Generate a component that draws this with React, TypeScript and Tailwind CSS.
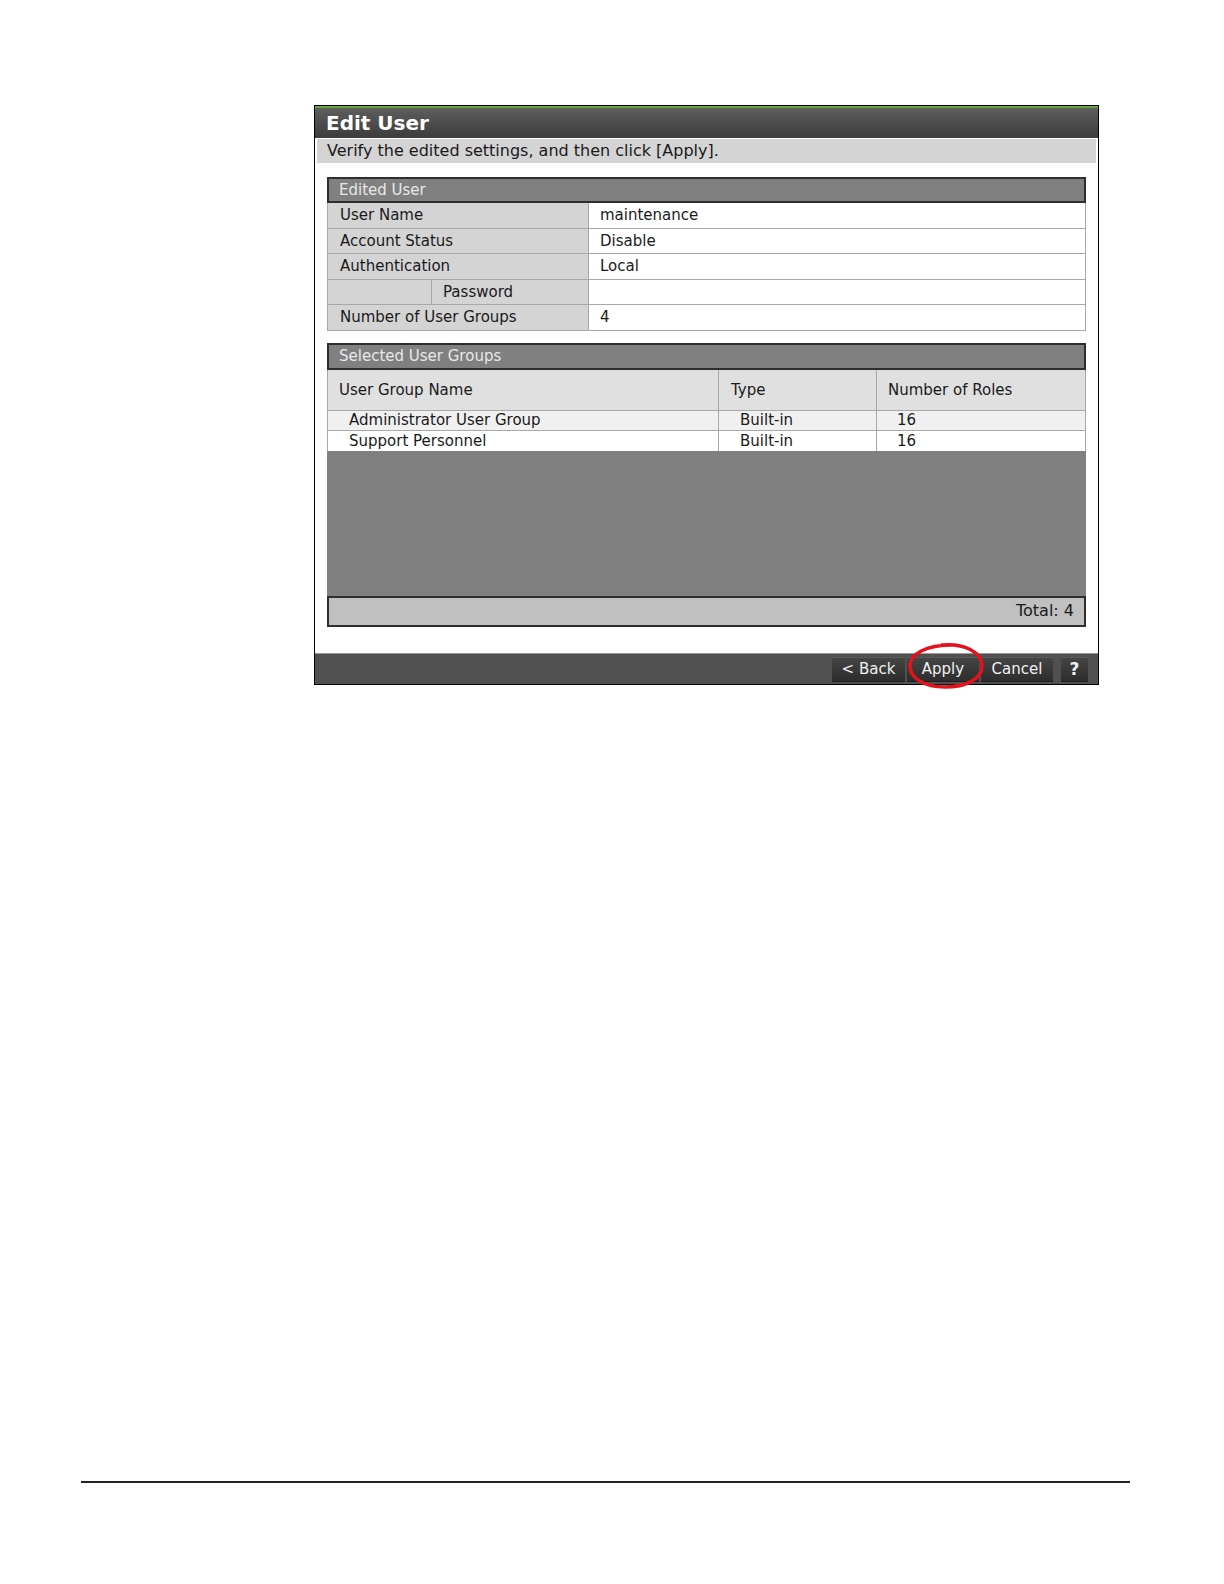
import React from "react";

const font = { fontFamily: '"DejaVu Sans", Verdana, sans-serif' };

function Row({ label, value, sub }: { label: string; value: string; sub?: boolean }) {
  return (
    <div className="flex h-[25.6px] border-b border-[#a8a8a8]">
      {sub ? (
        <div className="flex w-[261px] border-r border-[#a8a8a8] bg-[#d4d4d4]">
          <div className="w-[104px] border-r border-[#a8a8a8]" />
          <div className="flex items-center pl-[11px] text-[#1a1a1a]">{label}</div>
        </div>
      ) : (
        <div className="flex w-[261px] items-center border-r border-[#a8a8a8] bg-[#d4d4d4] pl-[12px] text-[#1a1a1a]">
          {label}
        </div>
      )}
      <div className="flex flex-1 items-center bg-white pl-[11px] text-[#1a1a1a]">{value}</div>
    </div>
  );
}

function Btn({ children, w }: { children: React.ReactNode; w: string }) {
  return (
    <div
      className={`${w} flex h-[25px] items-center justify-center border-t border-[#5a5a5a] bg-gradient-to-b from-[#454545] to-[#2c2c2c] text-[15px] text-[#f0f0f0] shadow-[inset_0_-1px_0_#1e1e1e]`}
    >
      {children}
    </div>
  );
}

export default function App() {
  return (
    <div className="relative h-[1584px] w-[1224px] bg-white text-[15px]" style={font}>
      <div className="flex flex-col pt-[105px] pl-[314px]">
        <div className="relative flex h-[580px] w-[785px] flex-col border border-black bg-white">
          <div className="h-[2px] bg-[#6aa533]" />
          <div className="flex h-[30px] items-center bg-gradient-to-b from-[#5e5e5e] to-[#3c3c3c] pl-[11px] text-[20px] font-bold leading-none text-white">
            Edit User
          </div>
          <div className="mx-[2px] mt-[1px] flex h-[24px] items-center bg-[#d4d4d4] pl-[10px] text-[16px] text-[#1a1a1a]">
            Verify the edited settings, and then click [Apply].
          </div>

          <div className="ml-[12px] mt-[14px] flex w-[759px] flex-col">
            <div className="flex h-[26px] items-center border-2 border-[#2e2e2e] bg-[#808080] pl-[10px] text-[#e8e8e8]">
              Edited User
            </div>
            <div className="flex flex-col border-x border-[#a8a8a8]">
              <Row label="User Name" value="maintenance" />
              <Row label="Account Status" value="Disable" />
              <Row label="Authentication" value="Local" />
              <Row label="Password" value="" sub />
              <Row label="Number of User Groups" value="4" />
            </div>

            <div className="mt-[12px] flex h-[27px] items-center border-2 border-[#2e2e2e] bg-[#808080] pl-[10px] text-[#e8e8e8]">
              Selected User Groups
            </div>
            <div className="flex flex-col border-x border-[#a8a8a8]">
              <div className="flex h-[41px] border-b border-[#a8a8a8] bg-[#e0e0e0] text-[#1a1a1a]">
                <div className="flex w-[391px] items-center border-r border-[#a8a8a8] pl-[11px]">User Group Name</div>
                <div className="flex w-[158px] items-center border-r border-[#a8a8a8] pl-[12px]">Type</div>
                <div className="flex flex-1 items-center pl-[11px]">Number of Roles</div>
              </div>
              <div className="flex h-[20px] border-b border-[#a8a8a8] bg-[#f0f0f0] text-[#1a1a1a]">
                <div className="flex w-[391px] items-center border-r border-[#a8a8a8] pl-[21px]">Administrator User Group</div>
                <div className="flex w-[158px] items-center border-r border-[#a8a8a8] pl-[21px]">Built-in</div>
                <div className="flex flex-1 items-center pl-[20px]">16</div>
              </div>
              <div className="flex h-[20px] bg-white text-[#1a1a1a]">
                <div className="flex w-[391px] items-center border-r border-[#a8a8a8] pl-[21px]">Support Personnel</div>
                <div className="flex w-[158px] items-center border-r border-[#a8a8a8] pl-[21px]">Built-in</div>
                <div className="flex flex-1 items-center pl-[20px]">16</div>
              </div>
            </div>
            <div className="h-[145px] bg-[#808080]" />
            <div className="flex h-[31px] items-start justify-end border-2 border-[#2e2e2e] bg-[#c0c0c0] pr-[10px] pt-[1px] text-[16px] text-[#1a1a1a]">
              Total: 4
            </div>
          </div>

          <div className="flex-1" />

          <div className="flex h-[31px] items-center justify-end gap-[2px] border-t border-[#9a9a9a] bg-[#505050] pr-[10px]">
            <Btn w="w-[73px]">&lt; Back</Btn>
            <Btn w="w-[72px]">Apply</Btn>
            <Btn w="w-[72px]">Cancel</Btn>
            <div className="w-[4px]" />
            <Btn w="w-[27px]">
              <span className="font-bold text-[17px]">?</span>
            </Btn>
          </div>

          <svg
            className="pointer-events-none absolute left-[591px] top-[534px]"
            width="80"
            height="50"
            viewBox="0 0 80 50"
          >
            <path
              d="M36 5 C58 3 76 12 76 26 C76 39 60 47 39 47 C18 47 4 38 4 26 C4 14 20 5 46 5"
              fill="none"
              stroke="#e3121d"
              strokeWidth="3.5"
              strokeLinecap="round"
            />
          </svg>
        </div>
      </div>

      <div className="absolute left-[81px] top-[1481px] h-[2px] w-[1049px] bg-[#222]" />
    </div>
  );
}
